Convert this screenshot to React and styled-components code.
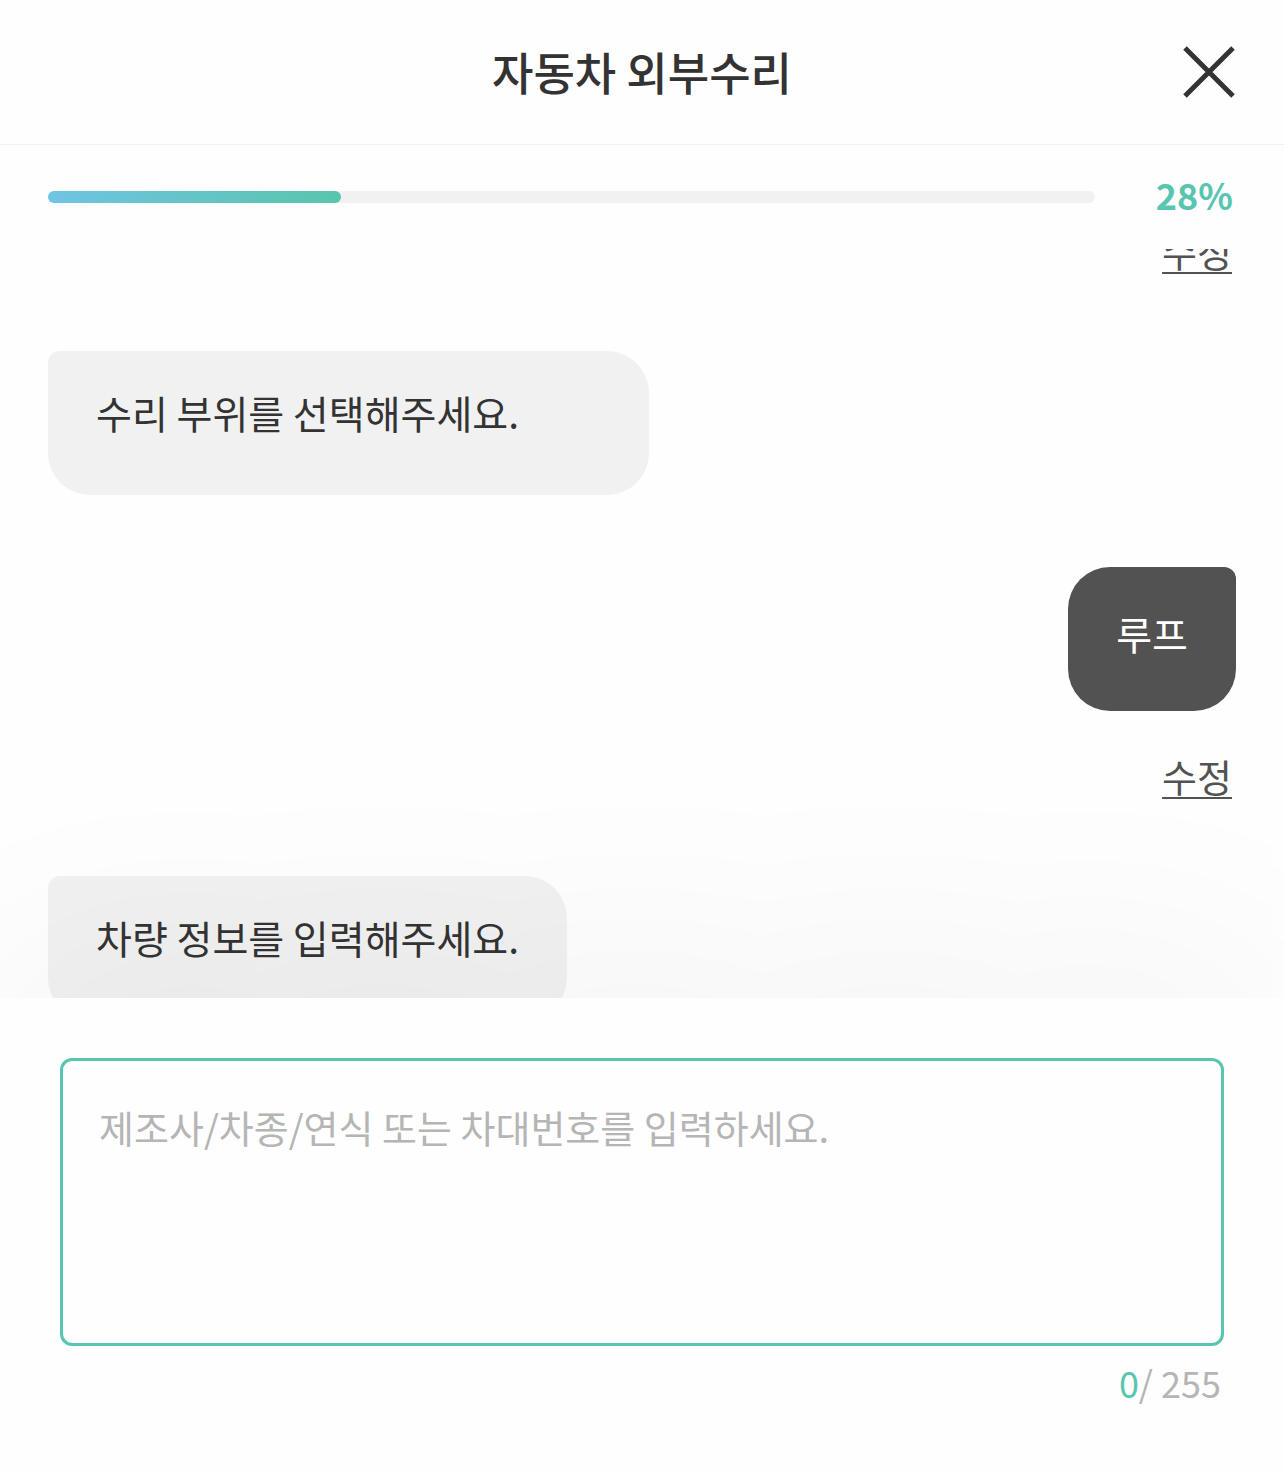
import React, { useEffect, useRef, useState } from 'react';
import styled, { createGlobalStyle } from 'styled-components';

const MAX_LENGTH = 255;
const PROGRESS = 28;

const App = () => {
  const [value, setValue] = useState('');
  const chatRef = useRef(null);

  useEffect(() => {
    chatRef.current.scrollTop = 27;
  }, []);

  return (
    <>
      <GlobalStyle />
      <Page>
        <Header>
          <Title>자동차 외부수리</Title>
          <CloseButton type="button" aria-label="닫기">
            <svg width="54" height="54" viewBox="0 0 54 54" fill="none" stroke="#333" strokeWidth="5">
              <path d="M3 3L51 51M51 3L3 51" />
            </svg>
          </CloseButton>
        </Header>

        <ProgressRow>
          <Track role="progressbar" aria-label="진행률" aria-valuenow={PROGRESS} aria-valuemin={0} aria-valuemax={100}>
            <Bar style={{ width: `${PROGRESS}%` }} />
          </Track>
          <Percent>{PROGRESS}%</Percent>
        </ProgressRow>

        <Chat ref={chatRef}>
          <Answer>
            <EditButton type="button">수정</EditButton>
          </Answer>
          <Question $minWidth="601px">수리 부위를 선택해주세요.</Question>
          <Answer>
            <Reply>루프</Reply>
            <EditButton type="button">수정</EditButton>
          </Answer>
          <Question>차량 정보를 입력해주세요.</Question>
        </Chat>

        <InputPanel>
          <TextBox
            aria-label="차량 정보"
            placeholder="제조사/차종/연식 또는 차대번호를 입력하세요."
            maxLength={MAX_LENGTH}
            value={value}
            onChange={(e) => setValue(e.target.value)}
          />
          <Counter>
            <span>{value.length}</span>/ {MAX_LENGTH}
          </Counter>
        </InputPanel>
      </Page>
    </>
  );
};

// Styled Components
const GlobalStyle = createGlobalStyle`
  * {
    box-sizing: border-box;
  }

  body {
    margin: 0;
    background-color: #fefefe;
  }

  body, button, textarea {
    font-family: "Noto Sans CJK KR", sans-serif;
  }
`;

const Page = styled.div`
  display: flex;
  flex-direction: column;
  height: 100vh;
  color: #333;
`;

const Header = styled.header`
  display: grid;
  grid-template-columns: 54px 1fr 54px;
  align-items: center;
  padding: 36px 48px;
  border-bottom: 1px solid #f1f1f1;
`;

const Title = styled.h1`
  grid-column: 2;
  margin: 0;
  font-size: 45px;
  font-weight: 500;
  line-height: 72px;
  text-align: center;
`;

const CloseButton = styled.button`
  display: flex;
  padding: 0;
  border: 0;
  background: none;
  cursor: pointer;
`;

const ProgressRow = styled.div`
  display: flex;
  align-items: center;
  padding: 24px 48px;
`;

const Track = styled.div`
  flex: 1;
  height: 12px;
  border-radius: 6px;
  background-color: #f1f1f1;
`;

const Bar = styled.div`
  height: 100%;
  border-radius: 6px;
  background: linear-gradient(135deg, #6fc4e4, #59c5ab);
`;

const Percent = styled.span`
  width: 141px;
  padding: 0 3px 6px 0;
  color: #58c5b0;
  font-size: 36px;
  font-weight: 700;
  line-height: 50px;
  text-align: right;
`;

const Chat = styled.main`
  display: flex;
  flex: 1;
  flex-direction: column;
  gap: 72px;
  min-height: 0;
  padding: 0 48px;
  overflow-y: auto;
  scrollbar-width: none;
`;

const Bubble = styled.p`
  flex-shrink: 0;
  margin: 0;
  font-size: 39px;
  line-height: 57px;
`;

const Question = styled(Bubble)`
  align-self: flex-start;
  min-width: ${({ $minWidth }) => $minWidth || 'auto'};
  padding: 33px 48px 54px;
  border-radius: 12px 42px 42px 42px;
  background-color: #f1f1f1;
`;

const Answer = styled.div`
  display: flex;
  flex-direction: column;
  flex-shrink: 0;
  align-items: flex-end;
  gap: 36px;
`;

const Reply = styled(Bubble)`
  padding: 38px 48px 49px;
  border-radius: 42px 12px 42px 42px;
  background-color: #525252;
  color: #fff;
`;

const EditButton = styled.button`
  padding: 0 4px;
  border: 0;
  background: none;
  color: #525252;
  font-size: 38px;
  line-height: 57px;
  text-decoration: underline;
  text-decoration-thickness: 2px;
  text-decoration-skip-ink: none;
  text-underline-offset: 5px;
  cursor: pointer;
`;

const InputPanel = styled.section`
  position: relative;
  padding: 60px;
  background-color: #fefefe;
  box-shadow: 0 0 250px rgba(0, 0, 0, 0.07);
`;

const TextBox = styled.textarea`
  display: block;
  width: 100%;
  height: 288px;
  padding: 37px 36px;
  border: 3px solid #58c5b0;
  border-radius: 12px;
  outline: none;
  background-color: #fefefe;
  color: #333;
  font-size: 38px;
  line-height: 57px;
  resize: none;

  &::placeholder {
    color: #b5b5b5;
    opacity: 1;
  }
`;

const Counter = styled.p`
  margin: 6px 0 0;
  padding-right: 3px;
  color: #b5b5b5;
  font-size: 36px;
  line-height: 60px;
  text-align: right;

  span {
    color: #58c5b0;
  }
`;

export default App;
